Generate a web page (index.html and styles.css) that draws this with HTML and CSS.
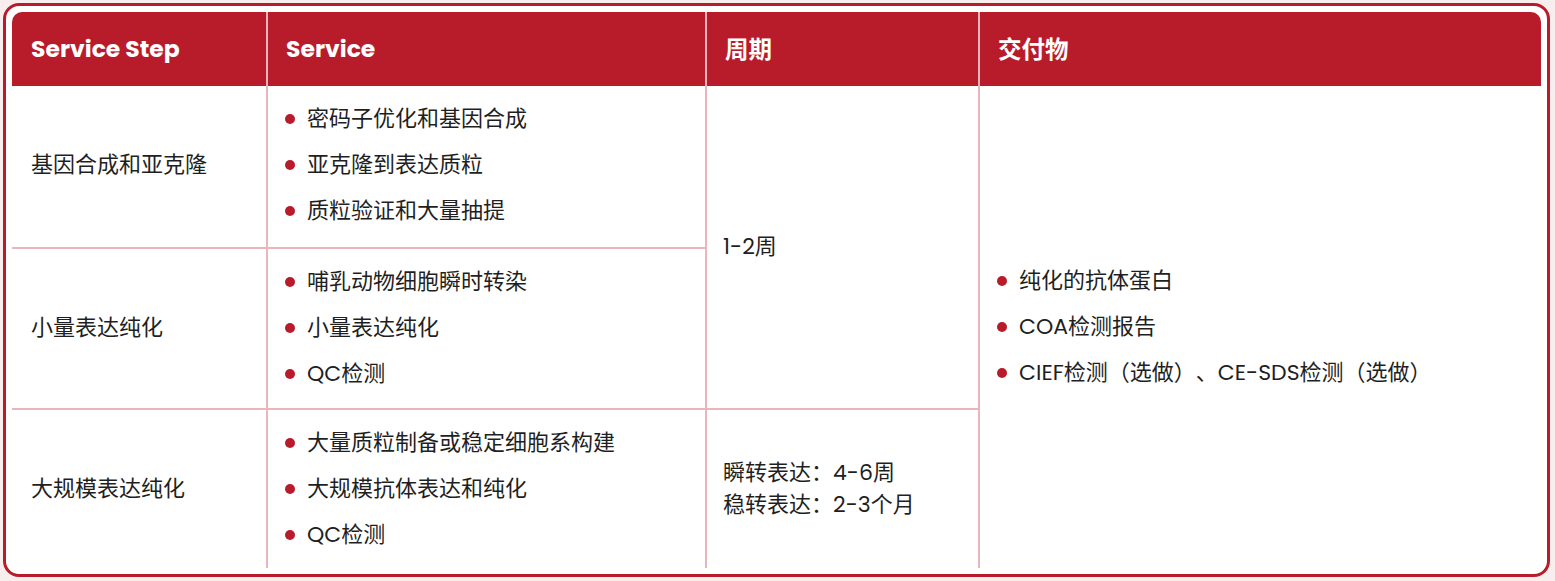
FILE: index.html
```html
<!DOCTYPE html>
<html lang="zh">
<head>
<meta charset="utf-8">
<title>Service Steps</title>
<link rel="stylesheet" href="styles.css">
</head>
<body>
<div class="frame">
  <div class="grid">
    <div class="th c1">Service Step</div>
    <div class="th c2">Service</div>
    <div class="th c3">周期</div>
    <div class="th c4">交付物</div>

    <div class="td c1 r1">基因合成和亚克隆</div>
    <div class="td c2 r1">
      <ul class="list">
        <li>密码子优化和基因合成</li>
        <li>亚克隆到表达质粒</li>
        <li>质粒验证和大量抽提</li>
      </ul>
    </div>
    <div class="td c3 r12">1-2周</div>
    <div class="td c4 r123">
      <ul class="list">
        <li>纯化的抗体蛋白</li>
        <li>COA检测报告</li>
        <li>CIEF检测（选做）、CE-SDS检测（选做）</li>
      </ul>
    </div>

    <div class="td c1 r2 top">小量表达纯化</div>
    <div class="td c2 r2 top">
      <ul class="list">
        <li>哺乳动物细胞瞬时转染</li>
        <li>小量表达纯化</li>
        <li>QC检测</li>
      </ul>
    </div>

    <div class="td c1 r3 top">大规模表达纯化</div>
    <div class="td c2 r3 top">
      <ul class="list">
        <li>大量质粒制备或稳定细胞系构建</li>
        <li>大规模抗体表达和纯化</li>
        <li>QC检测</li>
      </ul>
    </div>
    <div class="td c3 r3 top">
      <div class="lines">
        <div>瞬转表达：4-6周</div>
        <div>稳转表达：2-3个月</div>
      </div>
    </div>
  </div>
</div>
</body>
</html>
```

FILE: styles.css
```css
* { box-sizing: border-box; }

html, body {
  margin: 0;
  padding: 0;
}

body {
  background: #f8eeee;
  font-family: Poppins, Inter, "Noto Sans CJK SC", sans-serif;
  color: #1f1f1f;
  padding: 3px 5px 4px 3px;
  text-spacing-trim: space-all;
}

.frame {
  background: #ffffff;
  border: 3px solid #b81c2b;
  border-radius: 16px;
  padding: 6px;
}

.grid {
  display: grid;
  grid-template-columns: 254px 439px 273px 1fr;
  grid-template-rows: 74px 161px 161px 160px;
  border-radius: 10px 10px 0 0;
  overflow: hidden;
}

.th {
  background: #b81c2b;
  color: #ffffff;
  font-weight: 700;
  font-size: 23.5px;
  display: flex;
  align-items: center;
  padding: 0 18px 1px;
  grid-row: 1;
}

.td {
  display: flex;
  align-items: center;
  padding: 0 17px 1px;
  font-size: 22px;
  line-height: 32px;
}

.th.c1 { padding-left: 19px; }
.td.c1 { padding-left: 19px; }
.td.c3 { padding-left: 16px; }

.c1 { grid-column: 1; }
.c2 { grid-column: 2; border-left: 2px solid #e9b6bb; }
.c3 { grid-column: 3; border-left: 2px solid #e9b6bb; }
.c4 { grid-column: 4; border-left: 2px solid #e9b6bb; }

.r1 { grid-row: 2; padding-bottom: 3px; }
.r2 { grid-row: 3; }
.r3 { grid-row: 4; }
.r12 { grid-row: 2 / 4; }
.r123 { grid-row: 2 / 5; padding-bottom: 0; }

.top { border-top: 2px solid #e9b6bb; }

.list {
  list-style: none;
  margin: 0;
  padding: 0;
  display: flex;
  flex-direction: column;
  gap: 14px;
}

.list li {
  display: flex;
  align-items: center;
}

.list li::before {
  content: "";
  width: 10px;
  height: 10px;
  border-radius: 50%;
  background: #b81c2b;
  margin-right: 12px;
  flex-shrink: 0;
}
```
